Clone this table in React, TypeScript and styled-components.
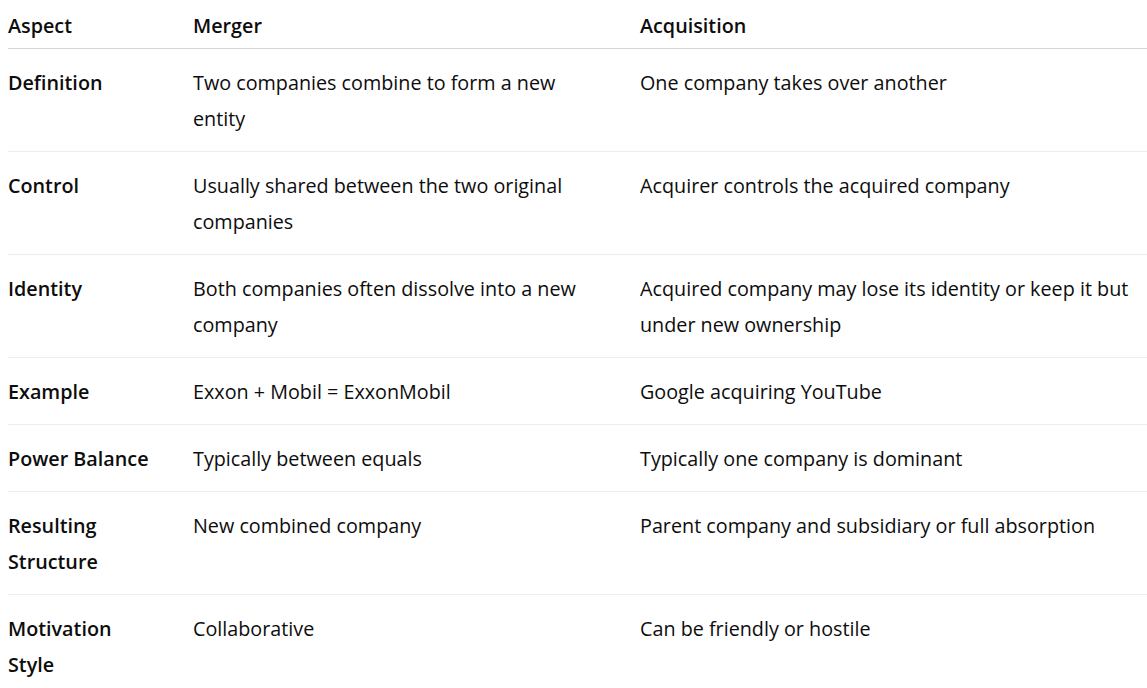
import React from "react";
import styled, { createGlobalStyle } from "styled-components";

const GlobalStyle = createGlobalStyle`
  html, body {
    margin: 0;
    padding: 0;
    background: #ffffff;
  }
  body {
    font-family: "Open Sans", "Noto Sans", "Liberation Sans", sans-serif;
    color: #0d0d0d;
    overflow: hidden;
  }
`;

const Wrapper = styled.div`
  padding-left: 8px;
  width: 1139px;
`;

const Table = styled.table`
  width: 100%;
  border-collapse: collapse;
  table-layout: fixed;
  font-size: 19.75px;
  line-height: 36px;
`;

const Col = styled.col<{ $w?: number }>`
  width: ${(p) => (p.$w ? `${p.$w}px` : "auto")};
`;

const HeadCell = styled.th`
  box-sizing: border-box;
  text-align: left;
  font-weight: 600;
  padding: 8px 0 4px 0;
  border-bottom: 1px solid #d4d4d4;
  vertical-align: top;
`;

const Row = styled.tr`
  border-bottom: 1px solid #ececec;
`;

const Cell = styled.td<{ $pr: number; $label?: boolean }>`
  box-sizing: border-box;
  padding: 16px ${(p) => p.$pr}px 14px 0;
  font-weight: ${(p) => (p.$label ? 600 : 400)};
  vertical-align: top;
`;

const rows: [string, string, string][] = [
  ["Definition", "Two companies combine to form a new entity", "One company takes over another"],
  ["Control", "Usually shared between the two original companies", "Acquirer controls the acquired company"],
  ["Identity", "Both companies often dissolve into a new company", "Acquired company may lose its identity or keep it but under new ownership"],
  ["Example", "Exxon + Mobil = ExxonMobil", "Google acquiring YouTube"],
  ["Power Balance", "Typically between equals", "Typically one company is dominant"],
  ["Resulting Structure", "New combined company", "Parent company and subsidiary or full absorption"],
  ["Motivation Style", "Collaborative", "Can be friendly or hostile"],
];

export default function App() {
  return (
    <>
      <GlobalStyle />
      <Wrapper>
        <Table>
          <colgroup>
            <Col $w={185} />
            <Col $w={447} />
            <Col />
          </colgroup>
          <thead>
            <tr>
              <HeadCell>Aspect</HeadCell>
              <HeadCell>Merger</HeadCell>
              <HeadCell>Acquisition</HeadCell>
            </tr>
          </thead>
          <tbody>
            {rows.map(([a, m, q]) => (
              <Row key={a}>
                <Cell $pr={40} $label>{a}</Cell>
                <Cell $pr={50}>{m}</Cell>
                <Cell $pr={0}>{q}</Cell>
              </Row>
            ))}
          </tbody>
        </Table>
      </Wrapper>
    </>
  );
}
